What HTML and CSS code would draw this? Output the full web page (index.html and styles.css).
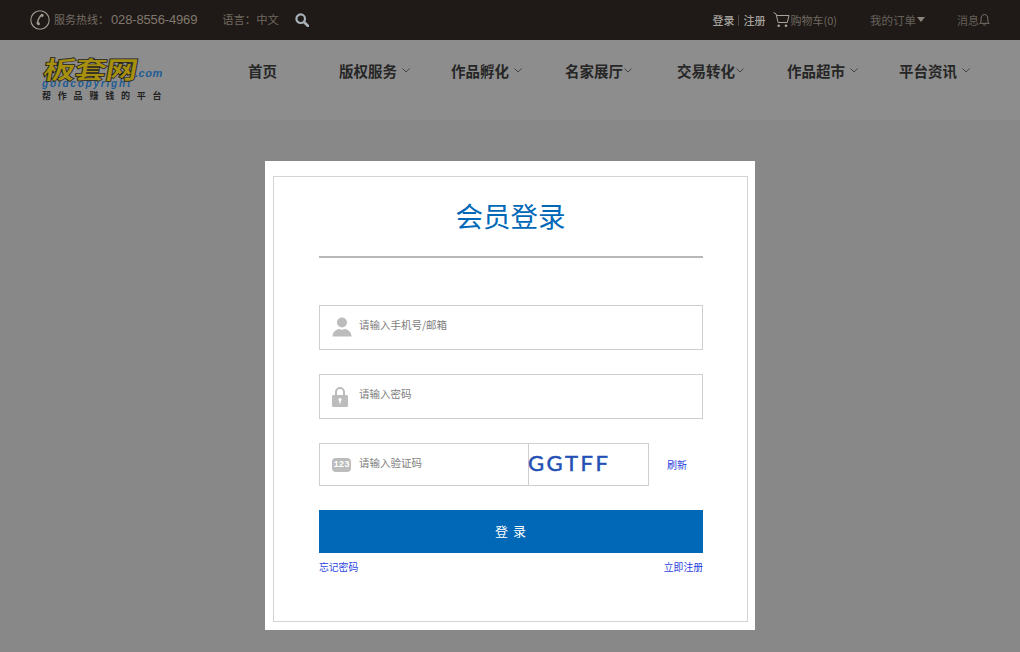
FILE: index.html
```html
<!DOCTYPE html>
<html lang="zh-CN">
<head>
  <meta charset="UTF-8" />
  <meta name="viewport" content="width=device-width, initial-scale=1.0"/>
  <title>会员登录</title>
  <link rel="stylesheet" href="styles.css">
</head>
<body>
  <!-- top bar -->
  <div class="topbar">
    <div class="top-left">
      <svg class="phone-icon" width="20" height="20" viewBox="0 0 20 20" fill="none">
        <circle cx="10" cy="10" r="9.2" stroke="#a09a92" stroke-width="1.1"/>
        <path d="M12.5 4.500C9.500 6 7 11 7.500 14.500" stroke="#a09a92" stroke-width="1.500"/>
        <path d="M11.500 3.500l2.500 1.500-1.300 2.300-2.500-1.500z" fill="#a09a92"/>
        <path d="M6.500 13l2.300-1.300 1.500 2.500-2 1.300z" fill="#a09a92"/>
      </svg>
      <span class="hotline">服务热线<i class="colon">：</i><em>028-8556-4969</em></span>
      <span class="lang">语言<i class="colon">：</i>中文</span>
      <svg class="search-icon" width="14" height="14" viewBox="0 0 14 14" fill="none">
        <circle cx="5.7" cy="5.700" r="4.300" stroke="#a8b0b8" stroke-width="2.200"/>
        <path d="M9 9l4 4" stroke="#a8b0b8" stroke-width="2.600" stroke-linecap="round"/>
      </svg>
    </div>
    <div class="top-right">
      <a class="auth">登录</a>
      <i class="auth-sep"></i>
      <a class="auth">注册</a>
      <svg class="cart-icon" width="17" height="16" viewBox="0 0 17 16" fill="none">
        <path d="M.5 .5l2.600 1.500 2 8.500h9.200L16 3.500H3.500" stroke="#a8a29a" stroke-width="1"/>
        <circle cx="5.700" cy="13.800" r="1.300" fill="#a8a29a"/>
        <circle cx="13" cy="13.800" r="1.300" fill="#a8a29a"/>
      </svg>
      <span class="cart-text">购物车(0)</span>
      <span class="orders">我的订单<i class="caret"></i></span>
      <span class="msgs">消息<svg width="11" height="13" viewBox="0 0 11 13" fill="none">
          <path d="M.8 10.300c1-.8 1.300-1.600 1.300-3.300V5.500C2.100 3.300 3.500 1.500 5.500 1.500s3.400 1.800 3.400 4V7c0 1.700.3 2.500 1.300 3.300z" stroke="#7a746c" stroke-width="1"/>
          <path d="M4.200 11.500c.3.800 2.300.8 2.600 0" stroke="#7a746c" stroke-width="1"/>
        </svg>
      </span>
    </div>
  </div>

  <!-- nav -->
  <div class="navbar">
    <div class="logo">
      <div class="logo-main"><span class="logo-name">板套网</span><span class="logo-com">.com</span></div>
      <div class="logo-en">goldcopyright</div>
      <div class="logo-slogan">帮作品赚钱的平台</div>
    </div>
    <ul class="nav">
      <li>首页</li>
      <li>版权服务<svg class="chev" width="8" height="5" viewBox="0 0 8 5"><path d="M.5.500 4 4 7.500.5" fill="none" stroke="#444" stroke-width="1"/></svg></li>
      <li>作品孵化<svg class="chev" width="8" height="5" viewBox="0 0 8 5"><path d="M.5.500 4 4 7.500.5" fill="none" stroke="#444" stroke-width="1"/></svg></li>
      <li class="tight">名家展厅<svg class="chev" width="8" height="5" viewBox="0 0 8 5"><path d="M.5.500 4 4 7.500.5" fill="none" stroke="#444" stroke-width="1"/></svg></li>
      <li class="tight">交易转化<svg class="chev" width="8" height="5" viewBox="0 0 8 5"><path d="M.5.500 4 4 7.500.5" fill="none" stroke="#444" stroke-width="1"/></svg></li>
      <li>作品超市<svg class="chev" width="8" height="5" viewBox="0 0 8 5"><path d="M.5.500 4 4 7.500.5" fill="none" stroke="#444" stroke-width="1"/></svg></li>
      <li>平台资讯<svg class="chev" width="8" height="5" viewBox="0 0 8 5"><path d="M.5.500 4 4 7.500.5" fill="none" stroke="#444" stroke-width="1"/></svg></li>
    </ul>
  </div>

  <!-- login -->
  <div class="main">
    <div class="card">
      <div class="card-inner">
        <h1>会员登录</h1>

        <div class="field">
          <svg class="field-icon user-icon" width="20" height="20" viewBox="0 0 20 20">
            <circle cx="10" cy="5.500" r="5" fill="#bcbcbc"/>
            <path d="M.5 19.500c0-4.500 3.500-7 6.500-7.500 2 1 4 1 6 0 3 .5 6.500 3 6.500 7.500z" fill="#bcbcbc"/>
          </svg>
          <span class="placeholder">请输入手机号/邮箱</span>
        </div>

        <div class="field">
          <svg class="field-icon" width="20" height="20" viewBox="0 0 20 20">
            <path d="M4 9V5a4 4 0 0 1 8 0V9" fill="none" stroke="#bcbcbc" stroke-width="2"/>
            <rect x="0" y="8" width="16" height="12" rx="1.500" fill="#bcbcbc"/>
            <circle cx="8" cy="12.500" r="1.600" fill="#fff"/>
            <rect x="7.300" y="13" width="1.400" height="3.500" fill="#fff"/>
          </svg>
          <span class="placeholder">请输入密码</span>
        </div>

        <div class="code-row">
          <div class="code-box">
            <div class="code-input">
              <span class="code-icon">123</span>
              <span class="placeholder">请输入验证码</span>
            </div>
            <div class="code-img">GGTFF</div>
          </div>
          <a class="refresh">刷新</a>
        </div>

        <button class="btn">登 录</button>

        <div class="links">
          <a>忘记密码</a>
          <a>立即注册</a>
        </div>
      </div>
    </div>
  </div>
</body>
</html>
```
FILE: styles.css
```css
* {
  margin: 0;
  padding: 0;
  box-sizing: border-box;
}

body {
  font-family: "Noto Sans CJK SC", "Liberation Sans", sans-serif;
  background: #888;
  min-height: 100vh;
  overflow: hidden;
}

/* top bar */
.topbar {
  height: 40px;
  background: #1f1a17;
  display: flex;
  align-items: center;
  justify-content: space-between;
  padding: 0 30px;
  font-size: 11px;
  color: #66605a;
}

.top-left,
.top-right {
  display: flex;
  align-items: center;
}

.phone-icon {
  margin-right: 4px;
}

.colon {
  font-style: normal;
  font-family: "Noto Sans CJK TC", sans-serif;
}

.hotline {
  color: #746c62;
  margin-top: -2px;
}

.hotline em {
  font-style: normal;
  font-family: "Liberation Sans", sans-serif;
  font-size: 13px;
  letter-spacing: -0.15px;
  color: #80786e;
  margin-left: 2px;
}

.lang {
  margin-left: 25px;
  font-size: 11.300px;
  color: #70695f;
  margin-top: -2px;
}

.search-icon {
  margin-left: 16px;
}

.auth {
  color: #a5a29d;
  font-weight: 500;
  margin-top: -1px;
}

.auth-sep {
  width: 1px;
  height: 11px;
  background: #4d4843;
  margin: 0 4px 0 4px;
}

.cart-icon {
  margin-left: 8px;
}

.cart-text {
  color: #6f6860;
  margin-top: -1px;
}

.orders {
  display: flex;
  align-items: center;
  font-size: 11.500px;
  margin-left: 33px;
  margin-top: -1px;
}

.caret {
  margin-left: 1px;
  border-left: 4px solid transparent;
  border-right: 4px solid transparent;
  border-top: 5px solid #8a847c;
}

.msgs {
  display: flex;
  align-items: center;
  margin-left: 32px;
  margin-top: -1px;
}

/* nav */
.navbar {
  height: 80px;
  background: #8d8d8d;
  display: flex;
  align-items: center;
  padding-left: 41px;
}

.logo {
  width: 207px;
  height: 64px;
  color: #222;
  padding-top: 7px;
}

.logo-main {
  display: flex;
  align-items: flex-end;
  height: 26px;
}

.logo-name {
  display: inline-block;
  width: 97px;
  padding-left: 2px;
  margin-right: -3px;
  font-size: 25px;
  line-height: 25px;
  font-weight: 900;
  color: #a8900f;
  -webkit-text-stroke: 0.7px #222;
  letter-spacing: -1px;
  transform: scaleX(1.3) skewX(-8deg);
  transform-origin: left center;
}

.logo-com {
  font-family: "Liberation Sans", sans-serif;
  font-size: 11px;
  line-height: 15px;
  font-weight: 700;
  font-style: italic;
  color: #1e5c94;
  letter-spacing: 0.5px;
}

.logo-en {
  font-family: "Liberation Sans", sans-serif;
  font-size: 10px;
  line-height: 9px;
  margin-top: -2px;
  padding-left: 1px;
  font-weight: 700;
  font-style: italic;
  color: #1e5c94;
  letter-spacing: 1.800px;
}

.logo-slogan {
  font-size: 9px;
  line-height: 12px;
  margin-top: 2px;
  font-weight: 700;
  letter-spacing: 6.800px;
  padding-left: 1px;
  white-space: nowrap;
}

.nav {
  list-style: none;
  display: flex;
  padding-bottom: 20px;
}

.nav li {
  width: 112px;
  font-size: 14.500px;
  font-weight: 700;
  color: #262626;
  display: flex;
  align-items: center;
  white-space: nowrap;
}

.nav li:nth-child(1) {
  width: 91px;
}

.nav li:nth-child(3) {
  width: 114px;
}

.nav li:nth-child(5) {
  width: 110px;
}

.chev {
  margin-left: 5px;
  margin-top: 1px;
}

.tight .chev {
  margin-left: 1px;
}

/* login card */
.main {
  display: flex;
  justify-content: center;
  padding-top: 41px;
}

.card {
  width: 490px;
  height: 469px;
  background: #fff;
  padding: 15px 7px 8px 8px;
}

.card-inner {
  height: 100%;
  border: 1px solid #d4d4d4;
  padding: 0 44px 0 45px;
}

h1 {
  height: 81px;
  border-bottom: 2px solid #b8b8b8;
  margin-bottom: 47px;
  padding-right: 1px;
  text-align: center;
  font-size: 27.500px;
  font-weight: 400;
  line-height: 76px;
  color: #0068b7;
}

.field {
  height: 45px;
  border: 1px solid #cfcfcf;
  display: flex;
  align-items: center;
  padding-left: 12px;
  margin-bottom: 24px;
}

.field-icon {
  flex: none;
}

.user-icon {
  margin-top: -2px;
}

.placeholder {
  font-size: 10.500px;
  color: #7d7d7d;
  margin-left: 8px;
  margin-bottom: 4px;
}

.field .placeholder {
  margin-left: 7px;
  margin-bottom: 6px;
}

.code-row {
  display: flex;
  align-items: center;
  margin-bottom: 24px;
}

.code-box {
  width: 330px;
  height: 43px;
  border: 1px solid #cfcfcf;
  display: flex;
}

.code-input {
  width: 209px;
  border-right: 1px solid #cfcfcf;
  display: flex;
  align-items: center;
  padding-left: 12px;
}

.code-icon {
  width: 19px;
  height: 14px;
  border-radius: 4px;
  background: #bcbcbc;
  color: #fff;
  font-family: "Liberation Mono", monospace;
  font-size: 9px;
  font-weight: 700;
  line-height: 14px;
  text-align: center;
  flex: none;
}

.code-img {
  flex: 1;
  font-family: "Lato", sans-serif;
  font-size: 22px;
  line-height: 38px;
  letter-spacing: 2.500px;
  margin-left: -1px;
  color: #2450b4;
  -webkit-text-stroke: 0.5px #2450b4;
}

.refresh {
  margin-left: 18px;
  font-size: 10px;
  color: #2b3fe0;
}

.btn {
  display: block;
  width: 100%;
  height: 43px;
  background: #0068b7;
  color: #fff;
  border: none;
  padding-bottom: 2px;
  font-family: inherit;
  font-size: 13px;
  letter-spacing: 1px;
}

.links {
  display: flex;
  justify-content: space-between;
  margin-top: 7px;
  font-size: 9.800px;
  line-height: 14px;
  color: #2b3fe0;
}
```
